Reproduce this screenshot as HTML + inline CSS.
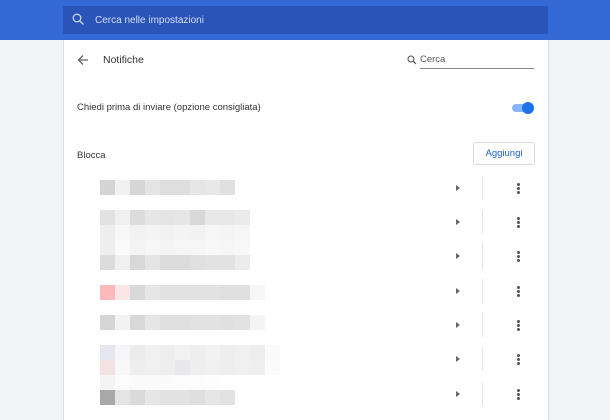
<!DOCTYPE html><html><head><style>
body{margin:0;width:610px;height:414px;overflow:hidden;background:#f1f3f4;font-family:"Liberation Sans",sans-serif;position:relative}
.a{position:absolute}
.m{position:absolute;width:15px;height:15px}
</style></head><body>
<div class="a" style="left:0;top:0;width:610px;height:40px;background:#3468d4"></div>
<div class="a" style="left:63px;top:6px;width:485px;height:28px;background:#2a54b8;border-radius:2px"></div>
<svg class="a" style="left:72px;top:13px" width="13" height="13" viewBox="0 0 13 13"><circle cx="5" cy="5" r="3.8" fill="none" stroke="#c7d3f0" stroke-width="1.3"/><path d="M8 8l3.5 3.5" stroke="#c7d3f0" stroke-width="1.4"/></svg>
<div class="a" style="left:95px;top:15px;font-size:10px;color:#d5def3">Cerca nelle impostazioni</div>
<div class="a" style="left:63px;top:40px;width:484px;height:380px;background:#fff;border-left:1px solid #dadce0;border-right:1px solid #dadce0"></div>
<svg class="a" style="left:77px;top:54px" width="12" height="12" viewBox="0 0 12 12"><path d="M11 6H2M6 1.5L1.5 6 6 10.5" fill="none" stroke="#5f6368" stroke-width="1.3"/></svg>
<div class="a" style="left:103px;top:54px;font-size:10.5px;color:#333">Notifiche</div>
<svg class="a" style="left:407px;top:55px" width="10" height="10" viewBox="0 0 10 10"><circle cx="4" cy="4" r="3" fill="none" stroke="#555" stroke-width="1.1"/><path d="M6.2 6.2L9 9" stroke="#555" stroke-width="1.2"/></svg>
<div class="a" style="left:420px;top:54px;font-size:9.5px;color:#555">Cerca</div>
<div class="a" style="left:420px;top:68px;width:114px;height:1px;background:#888"></div>
<div class="a" style="left:77px;top:102px;font-size:9.5px;color:#333">Chiedi prima di inviare (opzione consigliata)</div>
<div class="a" style="left:512px;top:104px;width:20px;height:8px;border-radius:4px;background:#8ab4f8"></div>
<div class="a" style="left:522px;top:102px;width:12px;height:12px;border-radius:6px;background:#1a73e8"></div>
<div class="a" style="left:77px;top:150px;font-size:9.5px;color:#333">Blocca</div>
<div class="a" style="left:473px;top:142px;width:60px;height:21px;border:1px solid #dadce0;border-radius:3px;font-size:9.5px;color:#1a5fc8;text-align:center;line-height:21px">Aggiungi</div>

<div id="mos"></div>
<script>
var rows=[[180,['#d4d4d4','#f0f0f0','#d6d6d6','#e4e4e4','#dedede','#dedede','#e6e6e6','#e8e8e8','#e0e0e0']],
[210,['#e2e2e2','#f0f0f0','#dcdcdc','#e6e6e6','#e4e4e4','#e6e6e6','#d8d8d8','#e8e8e8','#e8e8e8','#ebebeb']],
[225,['#eeeeee','#f8f8f8','#f2f2f2','#f4f4f4','#f2f2f2','#f4f4f4','#f2f2f2','#f6f6f6','#f4f4f4','#f6f6f6']],
[240,['#eeeeee','#fafafa','#f4f4f4','#f6f6f6','#f4f4f4','#f6f6f6','#f6f6f6','#f8f8f8','#f6f6f6','#f8f8f8']],
[255,['#dcdcdc','#f0f0f0','#d8d8d8','#e4e4e4','#dcdcdc','#dcdcdc','#e0e0e0','#e2e2e2','#e2e2e2','#ececec']],
[285,['#fdb8bb','#fbe6e6','#d9d9d9','#e6e6e6','#e2e2e2','#e2e2e2','#e2e2e2','#e2e2e2','#e0e0e0','#e0e0e0','#f6f6f6']],
[315,['#d6d6d6','#f2f2f2','#d8d8d8','#e6e6e6','#e0e0e0','#e0e0e0','#e2e2e2','#e2e2e2','#e0e0e0','#e2e2e2','#f4f4f4']],
[345,['#e6e6ee','#f6f6f8','#ececec','#f0f0f0','#eeeeee','#f2f2f2','#eeeeee','#f2f2f2','#eeeeee','#f0f0f0','#ededed','#fafafa']],
[360,['#f3e2e2','#f8f8f8','#eeeeee','#f0f0f0','#eeeeee','#e8e8ec','#eeeeee','#f0f0f0','#eeeeee','#f0f0f0','#efefef','#fbfbfb']],
[375,['#f4f4f4','#fcfcfc','#fafafa','#fafafa','#fafafa','#fcfcfc','#fcfcfc','#fdfdfd']],
[390,['#a8a8a8','#e4e4e4','#dadada','#e6e6e6','#e2e2e2','#e2e2e2','#dedede','#e6e6e6','#e2e2e2']]];
var h='';rows.forEach(function(r){r[1].forEach(function(c,i){h+='<div class="m" style="left:'+(100+15*i)+'px;top:'+r[0]+'px;background:'+c+'"></div>'})});
[188,222,256,291,325,359,394].forEach(function(y){
h+='<div class="a" style="left:456px;top:'+(y-3)+'px;width:0;height:0;border-top:3px solid transparent;border-bottom:3px solid transparent;border-left:4px solid #666"></div>';
h+='<div class="a" style="left:482px;top:'+(y-12)+'px;width:1px;height:24px;background:#e6e6e6"></div>';
for(var k=0;k<3;k++)h+='<div class="a" style="left:517px;top:'+(y-5+k*4)+'px;width:2.5px;height:2.5px;border-radius:2px;background:#555"></div>';
});
document.getElementById('mos').innerHTML=h;
</script>
</body></html>
